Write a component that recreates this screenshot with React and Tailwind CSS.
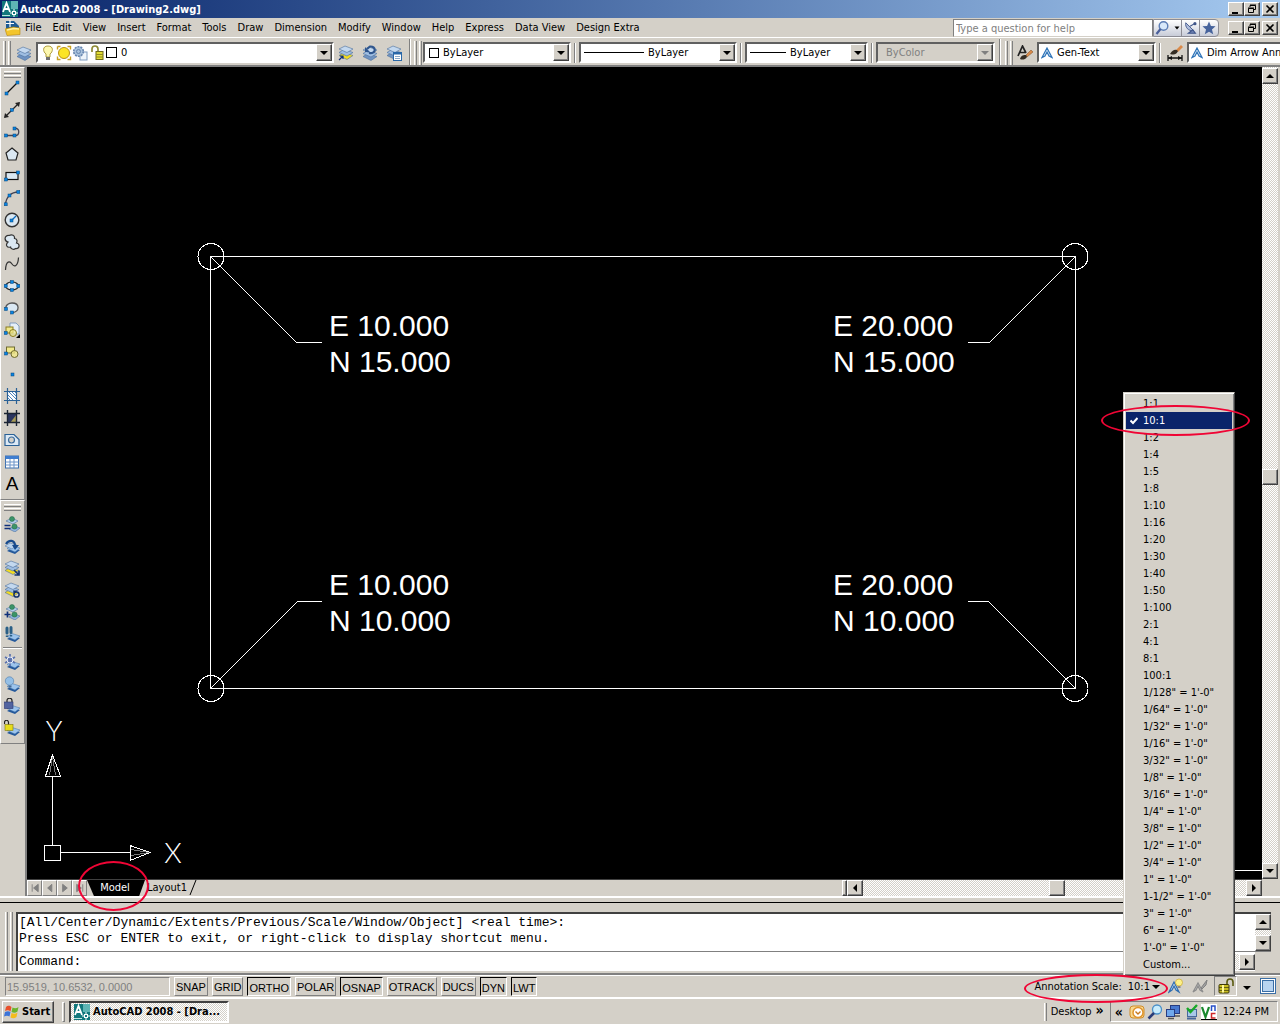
import clsx from 'clsx';

const ui = "font-['DejaVu_Sans_Condensed','DejaVu_Sans',sans-serif] text-[11px] leading-[14px] text-black";
const raised = 'border border-t-white border-l-white border-r-[#404040] border-b-[#404040] bg-[#d4d0c8] shadow-[inset_-1px_-1px_0_#808080]';
const sunken = 'border border-t-[#808080] border-l-[#808080] border-r-white border-b-white';
const checker = 'bg-[repeating-conic-gradient(#ffffff_0_25%,#d4d0c8_0_50%)] bg-[length:2px_2px]';

const menus = ['File', 'Edit', 'View', 'Insert', 'Format', 'Tools', 'Draw', 'Dimension', 'Modify', 'Window', 'Help', 'Express', 'Data View', 'Design Extra'];

const scales = [
  '1:1', '10:1', '1:2', '1:4', '1:5', '1:8', '1:10', '1:16', '1:20', '1:30', '1:40', '1:50', '1:100',
  '2:1', '4:1', '8:1', '100:1',
  `1/128" = 1'-0"`, `1/64" = 1'-0"`, `1/32" = 1'-0"`, `1/16" = 1'-0"`, `3/32" = 1'-0"`, `1/8" = 1'-0"`,
  `3/16" = 1'-0"`, `1/4" = 1'-0"`, `3/8" = 1'-0"`, `1/2" = 1'-0"`, `3/4" = 1'-0"`, `1" = 1'-0"`,
  `1-1/2" = 1'-0"`, `3" = 1'-0"`, `6" = 1'-0"`, `1'-0" = 1'-0"`, 'Custom...'
];

const modes = [
  { label: 'SNAP' },
  { label: 'GRID' },
  { label: 'ORTHO', on: true },
  { label: 'POLAR' },
  { label: 'OSNAP', on: true },
  { label: 'OTRACK' },
  { label: 'DUCS' },
  { label: 'DYN', on: true },
  { label: 'LWT', on: true }
];

function Icon({ children, className = 'h-4 w-4' }) {
  return (
    <svg viewBox="0 0 16 16" className={clsx('block shrink-0', className)} fill="none" aria-hidden="true">
      {children}
    </svg>
  );
}

// blue grip square used on most draw tools
function Dot({ x, y }) {
  return <rect x={x - 1.5} y={y - 1.5} width="3" height="3" fill="#0a84e0" stroke="#06457c" strokeWidth="0.5" />;
}

function Sheets({ x = 0, y = 0, top = '#c3d8ef', mid = '#9fbee2', low = '#6f93c2' }) {
  return (
    <g transform={`translate(${x} ${y})`} stroke="#4b6e9c" strokeWidth="0.6">
      <path d="M1 10.500l5-3 9 3-6 4z" fill={low} />
      <path d="M1 7.500l5-3 9 3-6 3.500z" fill={mid} />
      <path d="M1 4l6-3 8 3-6 3.500z" fill={top} />
    </g>
  );
}

function SmallSheets() {
  return (
    <g>
      <path d="M3 13l5-3 8 2-5 4z" fill="#24589a" />
      <path d="M3 10.500l5-3 8 2.500-5 4z" fill="#9cc4ec" stroke="#3f70a8" strokeWidth="0.500" />
    </g>
  );
}

// two thin sheets, each carrying a green object
function ObjectSheets() {
  return (
    <g>
      <path d="M2 5l6-3 6 3-5 3z" fill="#b4cfec" stroke="#4b6e9c" strokeWidth="0.600" />
      <path d="M5 13l5-3 6 2-5 4z" fill="#8fb4de" stroke="#4b6e9c" strokeWidth="0.600" />
      <circle cx="8" cy="3" r="2.500" fill="#3b9468" stroke="#256848" strokeWidth="0.500" />
      <circle cx="10.500" cy="10.500" r="2.600" fill="#3b9468" stroke="#256848" strokeWidth="0.500" />
    </g>
  );
}

const drawTools = [
  { name: 'Line', art: <><path d="M2.500 13.500L13.500 2.500" stroke="#111" strokeWidth="1.300" /><Dot x={2.5} y={13.5} /><Dot x={13.5} y={2.5} /></> },
  { name: 'Construction Line', art: <><path d="M1 15L15 1" stroke="#222" strokeWidth="1.300" /><path d="M0 16l1-5 4 4zM16 0l-5 1 4 4z" fill="#222" /><Dot x={8} y={8} /></> },
  { name: 'Polyline', art: <><path d="M2 11.500h9M11 4.500c5-1 5 7 0 7" stroke="#445" strokeWidth="1.300" /><Dot x={2} y={11.5} /><Dot x={10.5} y={11.5} /><Dot x={10.5} y={4.5} /></> },
  { name: 'Polygon', art: <path d="M8 2l6 5-2 7H4L2 7z" fill="#dbe8f2" stroke="#222" strokeWidth="1.200" /> },
  { name: 'Rectangle', art: <><rect x="2" y="4.500" width="12" height="7" fill="#dbe8f2" stroke="#111" strokeWidth="1.200" /><Dot x={2} y={11.5} /><Dot x={14} y={4.5} /></> },
  { name: 'Arc', art: <><path d="M1.500 14.500C2 7 7 2 14.500 2" stroke="#445" strokeWidth="1.300" /><Dot x={1.7} y={14.3} /><Dot x={5.5} y={5.5} /><Dot x={14.3} y={2} /></> },
  { name: 'Circle', art: <><circle cx="8" cy="8" r="6.800" fill="#dbe8f2" stroke="#333" strokeWidth="1.400" /><path d="M8 8l4-4" stroke="#0a6cc0" strokeWidth="1.200" /><Dot x={7.5} y={8.5} /></> },
  { name: 'Revision Cloud', art: <path d="M4 8C0 7 0 1 5 1.500c3-1.500 6 0 5.500 3C14 5 13 8 12.500 9c4 1 3 6-1 5.500-2 2-5 0-5-1.500C3 14 1 11 4 8z" fill="#dbe8f2" stroke="#333" strokeWidth="1.200" /> },
  { name: 'Spline', art: <path d="M1.500 14C2 4 6 5 8 8s6 3 6.500-6.500" stroke="#333" strokeWidth="1.200" /> },
  { name: 'Ellipse', art: <><ellipse cx="8" cy="8" rx="6.500" ry="4" fill="#dbe8f2" stroke="#222" strokeWidth="1.200" /><Dot x={1.7} y={8} /><Dot x={14.3} y={8} /><Dot x={8} y={4} /><Dot x={8} y={12} /></> },
  { name: 'Ellipse Arc', art: <><path d="M2 9C1 5 5 3 8 3c8 0 8 9 .5 9.500" fill="#dbe8f2" stroke="#555" strokeWidth="1.300" /><Dot x={2} y={9} /><Dot x={8} y={12.5} /></> },
  { name: 'Insert Block', art: <><path d="M6 1h6l3 3v8H6z" fill="#e4eef8" stroke="#6a8db5" strokeWidth="0.800" /><rect x="2" y="5" width="7" height="6" fill="#f1e889" stroke="#8a7d20" /><circle cx="9" cy="11" r="3.500" fill="#f1e889" fillOpacity="0.700" stroke="#8a7d20" /><path d="M16 12v4h-4z" fill="#000" /><Dot x={1.7} y={11} /></> },
  { name: 'Make Block', art: <><rect x="2.500" y="3" width="8" height="6" fill="#f1e889" stroke="#6e6a30" /><circle cx="10.500" cy="10" r="3.500" fill="#f1e889" fillOpacity="0.800" stroke="#6e6a30" /><Dot x={2} y={9.5} /></> },
  { name: 'Point', art: <Dot x={8.5} y={8.5} /> },
  { name: 'Hatch', art: <><rect x="3" y="4" width="10" height="8" fill="#fff" /><path d="M3 6l6 6M3 9l3 3M5 4l8 8M8 4l5 5M11 4l2 2" stroke="#3b78b5" strokeWidth="0.900" /><path d="M3.500 0v16M12.500 0v16M0 3.500h16M0 12.500h16" stroke="#2a6196" strokeWidth="1.200" /></> },
  { name: 'Gradient', art: <><rect x="3" y="4" width="10" height="9" fill="#2a3560" /><path d="M13 4v9H6z" fill="#a89c58" /><path d="M3.500 0v16M12.500 0v16M0 3.500h16M0 12.500h16" stroke="#1b2433" strokeWidth="1.400" /></> },
  { name: 'Region', art: <><path d="M1 2.500h9l5 5v6H1z" fill="#dce9f5" stroke="#2a6196" strokeWidth="1.200" /><circle cx="7.500" cy="8" r="3" fill="#d4d0c8" stroke="#3b6c9c" strokeWidth="1.200" /></> },
  { name: 'Table', art: <><rect x="1.500" y="2" width="13" height="12" fill="#fff" stroke="#3b6fae" /><rect x="1.500" y="2" width="13" height="3" fill="#3f7ed0" /><path d="M1.500 8h13M1.500 11h13M6 5v9M10 5v9" stroke="#6a93c8" /></> }
];

const layerTools = [
  { name: 'Make Object Layer Current', art: <><ObjectSheets /><path d="M0.500 9.500h6M0.500 12.500h6" stroke="#10307a" strokeWidth="1.500" /></> },
  { name: 'Layer Previous', art: <><SmallSheets /><path d="M1 8l5-3 7 2-5 4z" fill="#b9d2ec" stroke="#4b6e9c" strokeWidth="0.500" /><path d="M2 6c3-5 9-4 9 2" stroke="#174a8c" strokeWidth="2.200" /><path d="M8 7h7l-4 5z" fill="#174a8c" /></> },
  { name: 'Layer Walk', art: <><Sheets low="#f4dc20" /><path d="M10 10l5 5m0-4.500v4.500h-4.500" stroke="#14336e" strokeWidth="1.700" /></> },
  { name: 'Match Layer', art: <><Sheets low="#f4dc20" /><circle cx="12.500" cy="12.500" r="2.600" stroke="#14336e" strokeWidth="1.500" /><path d="M9 8.500h4.500L10 12z" fill="#14336e" /></> },
  { name: 'Copy to New Layer', art: <><ObjectSheets /><path d="M0.500 10.500h6M3.500 7.500v6" stroke="#10307a" strokeWidth="1.700" /></> },
  { name: 'Layer Isolate', art: <><SmallSheets /><path d="M3 2v5M7 1.500v5" stroke="#2a5f86" strokeWidth="3" strokeLinecap="round" /><path d="M3 9.500v1.500M7 9v1.500" stroke="#2a5f86" strokeWidth="2.400" /></> },
  { name: 'Layer Freeze', gap: true, art: <><SmallSheets /><path d="M6 0v12M1 3l10 6M11 3L1 9" stroke="#5b72ad" strokeWidth="1.700" /><circle cx="6" cy="6" r="3" stroke="#e8eefc" strokeWidth="1" /></> },
  { name: 'Layer Off', art: <><SmallSheets /><circle cx="5.500" cy="5" r="4.200" fill="#94bfe6" stroke="#5c86b2" strokeWidth="0.700" /><path d="M4.500 9.500h3v2h-3z" fill="#466b95" /></> },
  { name: 'Layer Lock', art: <><SmallSheets /><path d="M3 5V2.500c0-3 5-3 5 0V5" stroke="#222" strokeWidth="1.200" /><rect x="0.500" y="4" width="8.500" height="6.500" fill="#5264a0" stroke="#2a3670" strokeWidth="0.600" /></> },
  { name: 'Layer Unlock', art: <><SmallSheets /><path d="M4.500 6V2.500c0-3-4-3-4 0V4" stroke="#222" strokeWidth="1.200" /><rect x="1" y="4.500" width="8" height="6" fill="#e6dc1c" stroke="#7f7810" strokeWidth="0.600" /></> }
];

function CadLogo() {
  return (
    <Icon>
      <rect width="16" height="16" fill="#12787c" />
      <path d="M9 0h7v8H9z" fill="#5fb5b4" />
      <path d="M1 11L4.500 2 8 11M2.500 8h4" stroke="#fff" strokeWidth="1.800" />
      <path d="M8 12h8M12 8v8" stroke="#fff" strokeWidth="1" />
      <rect x="10.500" y="10.500" width="3" height="3" fill="#12787c" stroke="#fff" />
      <path d="M0 14.500h8" stroke="#bfe3e0" />
    </Icon>
  );
}

function DrawingLogo() {
  return (
    <Icon>
      <path d="M1 1h8l5 5v4H1z" fill="#1f5c94" />
      <path d="M5 0v7M1 3.500h8" stroke="#fff" strokeWidth="1.200" />
      <path d="M0 9l8-2 7 1v6.500L2 15.500z" fill="#f3c52c" stroke="#b8860b" strokeWidth="0.600" />
      <path d="M2 10l7-1.500 5 .5" stroke="#fdf0a8" strokeWidth="1.500" />
    </Icon>
  );
}

function Arrow({ dir = 'down', color = '#000' }) {
  const d = {
    down: 'M0 2h8L4 6z',
    up: 'M0 6h8L4 2z',
    left: 'M6 0v8L2 4z',
    right: 'M2 0v8l4-4z'
  }[dir];
  return (
    <svg viewBox="0 0 8 8" className="block h-2 w-2" aria-hidden="true">
      <path d={d} fill={color} />
    </svg>
  );
}

function ScrollButton({ dir, label }) {
  return (
    <button aria-label={label} className={clsx(raised, 'flex h-4 w-4 shrink-0 items-center justify-center')}>
      <Arrow dir={dir} />
    </button>
  );
}

function WindowButtons() {
  const btn = clsx(raised, 'flex h-[14px] w-4 items-center justify-center');
  return (
    <div className="flex items-center pr-[2px]">
      <button aria-label="Minimize" className={btn}>
        <svg viewBox="0 0 10 10" className="h-[10px] w-[10px]"><path d="M1 8h6v2H1z" /></svg>
      </button>
      <button aria-label="Restore" className={btn}>
        <svg viewBox="0 0 10 10" className="h-[10px] w-[10px]" fill="none" stroke="#000">
          <path d="M3 3V1.500h5.500v4H7M3 1h6" />
          <path d="M1.500 4.500h5v4h-5zM1 4h6" />
        </svg>
      </button>
      <button aria-label="Close" className={clsx(btn, 'ml-[2px]')}>
        <svg viewBox="0 0 10 10" className="h-[10px] w-[10px]"><path d="M1.500 1.500l7 7m0-7l-7 7" stroke="#000" strokeWidth="1.600" /></svg>
      </button>
    </div>
  );
}

function Grip({ className }) {
  return (
    <span className={clsx('flex shrink-0 gap-[2px]', className)}>
      <span className="w-[3px] border-l border-r border-l-white border-r-[#808080]" />
      <span className="w-[3px] border-l border-r border-l-white border-r-[#808080]" />
    </span>
  );
}

function TopGrip() {
  return (
    <div className="mx-[3px] mt-[3px] flex flex-col gap-[1px]">
      <span className="h-[3px] border-b border-t border-b-[#808080] border-t-white" />
      <span className="h-[3px] border-b border-t border-b-[#808080] border-t-white" />
    </div>
  );
}

function Separator() {
  return <span className="mx-[3px] h-5 w-[2px] shrink-0 border-l border-r border-l-[#808080] border-r-white" />;
}

function Combo({ label, value, className, disabled, children }) {
  return (
    <div
      className={clsx(
        'flex h-[21px] shrink-0 items-center border-2 border-b-white border-l-[#606060] border-r-white border-t-[#606060]',
        disabled ? 'bg-[#d4d0c8]' : 'bg-white',
        className
      )}
    >
      {children}
      <select
        aria-label={label}
        disabled={disabled}
        className={clsx('min-w-0 flex-1 appearance-none bg-transparent px-1 pt-px outline-none', disabled && 'text-[#808080]')}
      >
        <option>{value}</option>
      </select>
      <span className={clsx(raised, 'pointer-events-none flex h-[17px] w-4 shrink-0 items-center justify-center')}>
        <Arrow color={disabled ? '#808080' : '#000'} />
      </span>
    </div>
  );
}

function StyleMark() {
  return (
    <svg viewBox="0 0 12 12" className="ml-[2px] h-3 w-3 shrink-0" fill="none" aria-hidden="true">
      <path d="M1 10.500L6 1l5 9.500-3-1.500-2-4-2 4z" fill="#d6e8f8" stroke="#2f74b8" strokeWidth="1.200" />
    </svg>
  );
}

function TitleBar() {
  return (
    <header className="flex h-[18px] items-center bg-linear-to-r from-[#0a246a] to-[#a6caf0] pl-[2px]">
      <CadLogo />
      <h1 className="ml-[2px] flex-1 pt-px font-bold text-white">AutoCAD 2008 - [Drawing2.dwg]</h1>
      <WindowButtons />
    </header>
  );
}

function MenuBar() {
  return (
    <nav className="flex h-5 items-center border-b border-white pl-[5px]">
      <DrawingLogo />
      <ul className="ml-1 flex flex-1 gap-[11px] pt-px">
        {menus.map((m) => (
          <li key={m}>
            <button className="block">{m}</button>
          </li>
        ))}
      </ul>
      <input
        type="text"
        aria-label="Help search"
        placeholder="Type a question for help"
        className="h-[18px] w-[200px] border border-[#808080] border-b-[#d4d0c8] bg-white px-[2px] pt-px placeholder:text-[#808080]"
      />
      <div className="mr-[9px] flex h-[18px] rounded-r border border-[#8c8c94] bg-linear-to-b from-white to-[#c8ccd8]">
        <button aria-label="Search" className="flex w-7 items-center gap-1 border-r border-[#8c8c94]">
          <Icon>
            <circle cx="9.500" cy="6" r="4.300" fill="#d8e8fa" stroke="#5c7db5" strokeWidth="1.400" />
            <path d="M6.500 9l-4 5" stroke="#4a5f9a" strokeWidth="2.200" />
          </Icon>
          <svg viewBox="0 0 6 4" className="h-1 w-[6px]"><path d="M0.500 0.500h5L3 3.500z" /></svg>
        </button>
        <button aria-label="Communication Center" className="flex w-[18px] items-center justify-center border-r border-[#8c8c94]">
          <Icon className="h-[14px] w-[14px]">
            <path d="M2 2c-1 5 3 10 9 9z" fill="#aebcdc" stroke="#3e5488" />
            <path d="M7 6l5-3M5 14h8l-3-4z" stroke="#3e5488" strokeWidth="1.300" fill="#6f83b5" />
            <circle cx="12.500" cy="3" r="1.800" fill="#3e5488" />
          </Icon>
        </button>
        <button aria-label="Favorites" className="flex w-[18px] items-center justify-center">
          <Icon className="h-[14px] w-[14px]">
            <path d="M8 0.500l2.200 5.200 5.300.4-4.100 3.500 1.400 5.400L8 12.200 3.200 15l1.400-5.400L.5 6.100l5.300-.4z" fill="#46639c" />
          </Icon>
        </button>
      </div>
      <WindowButtons />
    </nav>
  );
}

function PropertyBar() {
  return (
    <div className="flex h-[29px] items-center overflow-hidden border-b-2 border-[#808080] pl-[3px] pt-[2px]">
      <Grip className="h-6" />
      <button aria-label="Layer Properties Manager" className="ml-[5px] mr-1 shrink-0"><Icon><Sheets y={1} /></Icon></button>
      <Combo label="Layer" value="0" className="w-[298px]">
        <Icon className="ml-[2px] h-4 w-4">
          <path d="M8 1c-6 0-5 6-2 8v3h4V9c3-2 4-8-2-8z" fill="#fdf8b0" stroke="#a89430" strokeWidth="0.900" />
          <path d="M6 12h4v3H6z" fill="#707070" />
        </Icon>
        <Icon>
          <path d="M1.500 1.500h3M11.500 1.500h3v3M14.500 11.500v3h-3M4.500 14.500h-3v-3M1.500 4.500v-3" stroke="#c8a020" strokeWidth="1.400" />
          <circle cx="8" cy="8" r="5.500" fill="#fbe424" stroke="#b8901c" />
        </Icon>
        <Icon>
          <rect x="8" y="7" width="7" height="8" fill="#eef4fa" stroke="#7f9cc0" />
          <circle cx="6.500" cy="6.500" r="4.800" fill="#a9c2dc" stroke="#6887b0" strokeWidth="1.600" strokeDasharray="2 1" />
          <circle cx="6.500" cy="6.500" r="2" stroke="#6887b0" />
        </Icon>
        <Icon className="ml-[2px] h-4 w-4">
          <path d="M8 8V4c0-4-6-4-6 0v3" stroke="#8e8a34" strokeWidth="1.700" />
          <rect x="6" y="6.500" width="7" height="8" fill="#e2dc34" stroke="#6f6b18" />
          <path d="M6 9.500h7M6 12h7" stroke="#8f8a20" />
        </Icon>
        <span className="h-[11px] w-[11px] shrink-0 border border-black" />
      </Combo>
      <button aria-label="Make Current" className="ml-1 shrink-0"><Icon><Sheets low="#f4dc20" /><path d="M1 15l4-4m-3 0h3v3" stroke="#10307a" strokeWidth="1.200" /></Icon></button>
      <button aria-label="Layer Previous" className="ml-2 shrink-0"><Icon><Sheets y={1} /><path d="M7 8C15 9 14 1 8 1.500L5 4" stroke="#2f568e" strokeWidth="2.200" /><path d="M3 2v5h5z" fill="#2f568e" /></Icon></button>
      <button aria-label="Layer States" className="ml-2 shrink-0"><Icon><Sheets /><rect x="7.500" y="7.500" width="8" height="8" fill="#fff" stroke="#2867a8" /><path d="M7 8.500h9" stroke="#2867a8" strokeWidth="2" /><path d="M9 11.500h5M9 13.500h5" stroke="#8aa8c8" /></Icon></button>
      <span className="ml-[7px] mr-[3px] h-7 w-[2px] shrink-0 border-l border-r border-l-[#808080] border-r-white" />
      <Grip className="mr-px h-6" />
      <Combo label="Color" value="ByLayer" className="w-[148px]">
        <span className="ml-1 h-[10px] w-[10px] shrink-0 border border-black" />
      </Combo>
      <Separator />
      <Combo label="Linetype" value="ByLayer" className="w-[158px]">
        <span className="ml-[3px] h-px w-[60px] shrink-0 bg-black" />
      </Combo>
      <Separator />
      <Combo label="Lineweight" value="ByLayer" className="w-[123px]">
        <span className="ml-[3px] h-px w-9 shrink-0 bg-black" />
      </Combo>
      <Separator />
      <Combo label="Plot Style" value="ByColor" disabled className="w-[119px] pl-1" />
      <span className="ml-1 mr-1 h-7 w-[2px] shrink-0 border-l border-r border-l-[#808080] border-r-white" />
      <Grip className="mr-1 h-6" />
      <button aria-label="Text Style" className="mr-1 shrink-0">
        <Icon>
          <path d="M1 11L5.500 1 9 8M3 7.500h5" stroke="#222" strokeWidth="1.700" />
          <path d="M9 10l5-5 2 2-6 5z" fill="#d98a4a" stroke="#7a4a20" strokeWidth="0.500" />
          <path d="M3 14c1-4 4-4 6-4l1 2c-2 3-5 3-7 2z" fill="#332c24" />
        </Icon>
      </button>
      <Combo label="Text Style" value="Gen-Text" className="w-[119px]">
        <StyleMark />
      </Combo>
      <Separator />
      <button aria-label="Dimension Style" className="ml-[3px] mr-1 shrink-0">
        <Icon>
          <path d="M1 10v6M15 10v6M1 13h14" stroke="#111" strokeWidth="1.300" />
          <path d="M1 13l4-2v4zM15 13l-4-2v4z" fill="#111" />
          <path d="M9 5l5-5 2 2-5 5z" fill="#d98a4a" />
          <path d="M3 9c3-5 6-5 8-3-2 4-4 4-8 3z" fill="#332c24" />
        </Icon>
      </button>
      <Combo label="Dimension Style" value="Dim Arrow Annotative" className="w-[160px]">
        <StyleMark />
      </Combo>
    </div>
  );
}

function ToolButton({ tool }) {
  return (
    <>
      {tool.gap && <span className="mx-[2px] mb-[2px] mt-[2px] h-[2px] border-b border-t border-b-white border-t-[#808080]" />}
      <button aria-label={tool.name} className="flex h-[22px] w-[22px] items-center justify-center">
        <Icon>{tool.art}</Icon>
      </button>
    </>
  );
}

function SideTools() {
  return (
    <aside className="flex w-[27px] shrink-0 flex-col border-r-2 border-[#808080]">
      <div className="flex flex-col border border-b-[#808080] border-l-white border-r-[#808080] border-t-white pb-1">
        <TopGrip />
        <div className="mt-[-1px] flex flex-col">
          {drawTools.map((t) => <ToolButton key={t.name} tool={t} />)}
          <button
            aria-label="Multiline Text"
            className="h-[22px] w-[22px] text-center font-['Liberation_Sans',sans-serif] text-[19px] leading-[22px]"
          >
            A
          </button>
        </div>
      </div>
      <div className="flex flex-col border border-b-[#808080] border-l-white border-r-[#808080] border-t-white pb-1">
        <TopGrip />
        <div className="mt-[2px] flex flex-col">
          {layerTools.map((t) => <ToolButton key={t.name} tool={t} />)}
        </div>
      </div>
    </aside>
  );
}

function Drawing() {
  const corners = [[184, 189], [1048, 189], [184, 621], [1048, 621]];
  const labels = [
    { x: 302, y: 269, e: 'E 10.000', n: 'N 15.000' },
    { x: 806, y: 269, e: 'E 20.000', n: 'N 15.000' },
    { x: 302, y: 528, e: 'E 10.000', n: 'N 10.000' },
    { x: 806, y: 528, e: 'E 20.000', n: 'N 10.000' }
  ];
  return (
    <svg width="1235" height="812" className="block" fill="none" stroke="#fff" shapeRendering="crispEdges">
      <rect x="183.500" y="189.500" width="865" height="432" />
      {corners.map(([cx, cy]) => <circle key={`${cx}-${cy}`} cx={cx} cy={cy + 0.5} r="13" />)}
      <path d="M183.500 189.500l86 86h25M1048.500 189.500l-86 86h-22M183.500 621.500l87-87h24M1048.500 621.500l-87-87h-21" />
      <path d="M1180 803.500h55" />
      <g fill="#fff" stroke="none" className="font-['Liberation_Sans',sans-serif] text-[30px]">
        {labels.map((l) => (
          <g key={`${l.x}-${l.y}`}>
            <text x={l.x} y={l.y}>{l.e}</text>
            <text x={l.x} y={l.y + 36}>{l.n}</text>
          </g>
        ))}
      </g>
      <g>
        <rect x="17.500" y="778.500" width="16" height="15" />
        <path d="M25.500 778v-69M33 785.500h70" />
        <path d="M25.500 688l-7 21h15zM123 785.500l-20-7v15z" />
        <path d="M25.500 690l-3 18M25.500 690l3 18M122 785.500l-18-3M122 785.500l-18 3" stroke="#777" />
      </g>
      <g fill="#fff" stroke="none" textAnchor="middle" className="font-[Lato,sans-serif] text-[28px] font-light">
        <text x="27" y="674">Y</text>
        <text x="146" y="796">X</text>
      </g>
    </svg>
  );
}

// red highlight laid over the control it wraps
function Ring({ className }) {
  return <span className={clsx('pointer-events-none absolute z-30 rounded-[50%] border-2 border-[#f00535]', className)} />;
}

function TabStrip() {
  const nav = [
    { d: 'M4.500 3v8M11 3v8L6 7z', label: 'First tab' },
    { d: 'M9.500 3v8L5 7z', label: 'Previous tab' },
    { d: 'M5 3v8l5-4z', label: 'Next tab' },
    { d: 'M4 3v8l5-4zM10.500 3v8', label: 'Last tab' }
  ];
  return (
    <div className="flex h-[17px] items-stretch border-t border-[#404040]">
      {nav.map((n) => (
        <button key={n.label} aria-label={n.label} className="w-[15px] border border-b-[#808080] border-l-white border-r-[#808080] border-t-white">
          <svg viewBox="0 0 14 14" className="h-[14px] w-[13px]" fill="#808080" stroke="#808080"><path d={n.d} /></svg>
        </button>
      ))}
      <div className="relative flex">
        <button className="w-[58px] bg-black pb-[1px] pr-[2px] text-center text-white [clip-path:polygon(0_0,100%_0,90%_100%,12%_100%)]">Model</button>
        <Ring className="left-[-9px] top-[-19px] h-[50px] w-[71px]" />
      </div>
      <button className="pb-[1px] pl-[2px]">Layout1</button>
      <svg viewBox="0 0 10 16" className="h-4 w-[10px]"><path d="M9 0L3 15" stroke="#000" /></svg>
      <span className="flex-[646]" />
      <div className="flex flex-[420]">
        <span className={clsx(raised, 'h-4 w-[5px]')} />
        <ScrollButton dir="left" label="Scroll left" />
        <div className={clsx(checker, 'flex flex-1')}>
          <span className="flex-[185]" />
          <span className={clsx(raised, 'h-4 w-4')} />
          <span className="flex-[181]" />
        </div>
        <ScrollButton dir="right" label="Scroll right" />
      </div>
    </div>
  );
}

function Workspace() {
  return (
    <main className="flex flex-1 border-b-2 border-white">
      <SideTools />
      <div className="flex min-w-0 flex-1 flex-col">
        <div className="flex flex-1">
          <div className="min-w-0 flex-1 overflow-hidden bg-black">
            <Drawing />
          </div>
          <div className={clsx(checker, 'flex w-4 flex-col pt-px')}>
            <ScrollButton dir="up" label="Scroll up" />
            <span className="flex-[385]" />
            <span className={clsx(raised, 'h-4 w-4')} />
            <span className="flex-[379]" />
            <ScrollButton dir="down" label="Scroll down" />
          </div>
        </div>
        <div className="flex">
          <div className="flex-1"><TabStrip /></div>
          <span className="w-4" />
        </div>
      </div>
      <span className="w-[2px]" />
    </main>
  );
}

function CommandLine() {
  const mono = "font-['Liberation_Mono',monospace] text-[13px] leading-4";
  return (
    <section className="mt-1 flex border-t border-black px-[5px] pb-[2px] pt-[9px]">
      <Grip className="mr-[3px]" />
      <div className="min-w-0 flex-1 border-l-2 border-t-2 border-[#404040] bg-white">
        <div className="flex h-[38px] border-b border-[#808080]">
          <pre className={clsx(mono, 'flex-1 overflow-hidden pl-[1px] pt-[1px]')}>
            {'[All/Center/Dynamic/Extents/Previous/Scale/Window/Object] <real time>:\nPress ESC or ENTER to exit, or right-click to display shortcut menu.'}
          </pre>
          <div className={clsx(checker, 'flex w-4 flex-col justify-between')}>
            <ScrollButton dir="up" label="Scroll history up" />
            <ScrollButton dir="down" label="Scroll history down" />
          </div>
        </div>
        <div className="flex h-[19px] items-center">
          <label htmlFor="command" className={clsx(mono, 'pl-[1px]')}>Command:</label>
          <input id="command" type="text" className={clsx(mono, 'min-w-0 flex-1 px-2 outline-none')} />
          <div className={clsx(checker, 'flex w-[100px] justify-end')}>
            <ScrollButton dir="right" label="Scroll command right" />
          </div>
          <span className="h-[19px] w-4 bg-[#d4d0c8]" />
        </div>
      </div>
      <span className="w-1" />
    </section>
  );
}

function ScaleMenu() {
  return (
    <ul
      role="menu"
      className="absolute bottom-[20px] right-[2px] z-20 w-[112px] border border-b-[#404040] border-l-[#d4d0c8] border-r-[#404040] border-t-[#d4d0c8] bg-[#d4d0c8] p-[2px] shadow-[inset_1px_1px_0_#fff,inset_-1px_-1px_0_#808080]"
    >
      {scales.map((s) => {
        const active = s === '10:1';
        return (
          <li key={s} role="none" className={clsx('relative h-[17px]', active && 'bg-[#0a246a]')}>
            <button role="menuitem" className={clsx('block h-[17px] w-full pl-[17px] text-left', active && 'text-white')}>{s}</button>
            {active && (
              <>
                <svg viewBox="0 0 8 8" className="absolute left-1 top-[5px] h-2 w-2" fill="none"><path d="M0.500 3.500L3 6l4.500-5" stroke="#fff" strokeWidth="2" /></svg>
                <Ring className="left-[-25px] top-[-7px] h-[31px] w-[149px]" />
              </>
            )}
          </li>
        );
      })}
    </ul>
  );
}

function StatusBar() {
  const sans = "font-['Liberation_Sans',sans-serif] text-[11px] leading-[18px]";
  return (
    <section className="flex h-[26px] items-center border-b-2 border-t-2 border-b-white border-t-[#808080] pl-[5px] pr-1 shadow-[inset_0_1px_0_#fff]">
      <output className={clsx(sunken, sans, 'h-[19px] w-[165px] pl-px text-[#808080]')}>15.9519, 10.6532, 0.0000</output>
      <div className="ml-1 flex gap-1">
        {modes.map((m) => (
          <button
            key={m.label}
            aria-pressed={!!m.on}
            className={clsx(
              sans,
              'h-[19px] px-px',
              m.on
                ? 'border border-b-white border-l-black border-r-white border-t-black pt-px'
                : 'border border-b-[#808080] border-l-white border-r-[#808080] border-t-white'
            )}
          >
            {m.label}
          </button>
        ))}
      </div>
      <span className="flex-1" />
      <div className="relative mr-2 flex items-center pt-px">
        <span>Annotation Scale:</span>
        <button aria-haspopup="menu" className="ml-[6px] flex items-center gap-[2px]">
          10:1 <Arrow />
        </button>
        <Ring className="bottom-[-9px] left-[-10px] right-[-8px] h-[29px]" />
      </div>
      <button aria-label="Annotation Visibility" className="mr-2">
        <Icon>
          <path d="M1 14L6 4l5 10-3-2-2-4-2 4z" fill="#cfe2f4" stroke="#2c6cb0" strokeWidth="1.200" />
          <circle cx="11" cy="4.500" r="3.500" fill="#fdf088" stroke="#c8a830" strokeWidth="0.700" />
          <path d="M9.500 8h3v2h-3z" fill="#888" />
        </Icon>
      </button>
      <button aria-label="Add Scales Automatically" className="mr-[6px]">
        <Icon>
          <path d="M1 14L6 5l5 9-3-2-2-4-2 4z" fill="#c8c8c8" stroke="#8c8c8c" strokeWidth="1.200" />
          <path d="M9 10l6-8-1 5-4 4z" fill="#a0a0a0" stroke="#808080" />
        </Icon>
      </button>
      <div className="relative mr-[6px]">
        <button aria-label="Toolbar Lock" className={clsx(sunken, 'flex h-5 w-[23px] items-center justify-center')}>
          <Icon>
            <path d="M9 8V4c0-4 6-4 6 0v4" stroke="#5a5a10" strokeWidth="1.600" />
            <rect x="1" y="6.500" width="10" height="8.500" rx="1" fill="#c8bc20" stroke="#3c3808" />
            <path d="M1 9.500h10M1 12.500h10" stroke="#3c3808" strokeWidth="0.700" />
            <path d="M5 7v7.500" stroke="#fff79a" strokeWidth="2" />
          </Icon>
        </button>
        <ScaleMenu />
      </div>
      <button aria-label="Status Bar Menu" className="mt-1"><Arrow /></button>
      <button aria-label="Clean Screen" className="ml-[9px]">
        <Icon>
          <rect x="0.500" y="0.500" width="15" height="15" fill="#fff" stroke="#3a6ea5" />
          <rect x="2.500" y="2.500" width="11" height="11" fill="#b8d4f0" stroke="#3a6ea5" />
        </Icon>
      </button>
    </section>
  );
}

function Taskbar() {
  return (
    <footer className="flex h-[25px] items-center gap-1 px-[2px]">
      <button className={clsx(raised, 'flex h-[22px] w-[52px] items-center gap-[2px] pl-px font-bold')}>
        <Icon>
          <path d="M2 3c2-2 4-1 5.500 0L6.500 7.500C5 6 3 6 1 7z" fill="#e8502c" />
          <path d="M8.500 3.500c2 1 4 1 6-.5l-1 4.500c-2 1.500-4 1.500-6 .5z" fill="#6cb42c" />
          <path d="M1 8c2-1 4-1 5.500 0l-1 4.500C4 11.500 2 11.500 0 12.500z" fill="#3c74d8" />
          <path d="M7.500 9c2 1 4 1 6-.5l-1 4.500c-2 1.500-4 1.500-6 .5z" fill="#f4bc1c" />
        </Icon>
        Start
      </button>
      <span className="ml-1 h-5 w-[3px] border border-b-[#808080] border-l-white border-r-[#808080] border-t-white" />
      <button className={clsx(checker, 'flex h-[22px] w-[160px] items-center gap-[3px] border-2 border-b-white border-l-[#404040] border-r-white border-t-[#404040] pl-[3px] font-bold')}>
        <CadLogo />
        AutoCAD 2008 - [Dra...
      </button>
      <span className="flex-1" />
      <span className="h-[18px] w-[3px] border-l border-r border-l-white border-r-[#808080]" />
      <span>Desktop</span>
      <button aria-label="More desktop items" className="mr-[2px] pb-1 text-[14px] font-bold leading-[14px]">»</button>
      <div className={clsx(sunken, 'flex h-[21px] items-center gap-[2px] px-1')}>
        <button aria-label="Show hidden icons" className="mr-1 text-[14px] font-bold leading-[14px]">«</button>
        <Icon>
          <rect x="1" y="2" width="14" height="12" rx="3" fill="#f8d890" stroke="#d08c28" />
          <circle cx="9" cy="8.500" r="5" fill="#fff" stroke="#e0942c" strokeWidth="1.500" />
          <path d="M6.500 7.500L9 10l2.500-2.500" stroke="#c8781c" strokeWidth="1.400" />
        </Icon>
        <Icon>
          <circle cx="10" cy="5.500" r="4.500" fill="#c8ecfc" stroke="#4a90c8" strokeWidth="1.300" />
          <path d="M7 9l-5.500 5.500" stroke="#2a3c78" strokeWidth="2.600" />
        </Icon>
        <Icon>
          <rect x="5.500" y="1.500" width="9" height="8" fill="#4878d0" stroke="#283c80" />
          <rect x="1.500" y="5.500" width="8" height="7" fill="#70a8ec" stroke="#283c80" />
          <path d="M3 14.500h6M10 12h5" stroke="#555" strokeWidth="1.500" />
        </Icon>
        <Icon>
          <rect x="4.500" y="5.500" width="9" height="7" fill="#a8c8e8" stroke="#48689c" />
          <path d="M4 14.500h9" stroke="#48689c" strokeWidth="2" />
          <path d="M4 4l3.500 4L14 1" stroke="#18a828" strokeWidth="2.400" />
        </Icon>
        <Icon>
          <rect width="16" height="16" fill="#fff" />
          <path d="M1 3l3.500 10L8 3" stroke="#18882c" strokeWidth="2.200" />
          <path d="M10.500 7V2h3.500v5" stroke="#2850c8" strokeWidth="1.500" />
          <path d="M14.500 9.500h-4v4.500h4" stroke="#d02828" strokeWidth="1.500" />
          <path d="M0 15.500h16" stroke="#000" />
        </Icon>
        <time className="ml-1 mr-1 whitespace-nowrap">12:24 PM</time>
      </div>
    </footer>
  );
}

export default function App() {
  return (
    <div className={clsx(ui, 'flex min-h-screen flex-col overflow-hidden bg-[#d4d0c8]')}>
      <TitleBar />
      <MenuBar />
      <PropertyBar />
      <Workspace />
      <CommandLine />
      <StatusBar />
      <Taskbar />
    </div>
  );
}
